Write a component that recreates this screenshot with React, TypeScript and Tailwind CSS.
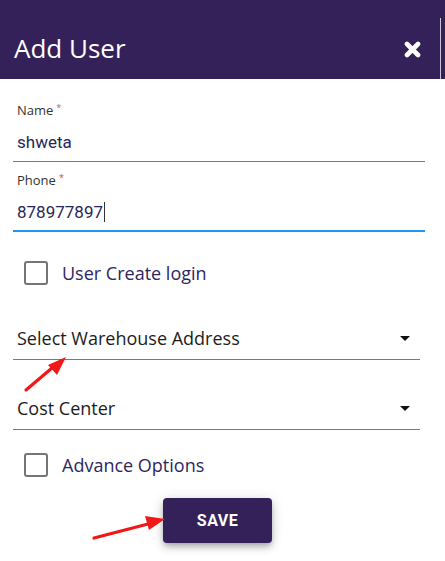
import React from "react";

const Checkbox = ({ label }: { label: string }) => (
  <div className="flex items-center h-[24px] pl-[11px]">
    <div className="w-[24px] h-[24px] border-2 border-[#757575] rounded-[3px] bg-white" />
    <span className="ml-[14px] text-[18px] leading-[24px] text-[#2e2660]" style={{ fontFamily: '"Open Sans", sans-serif' }}>
      {label}
    </span>
  </div>
);

const Caret = () => (
  <svg width="10" height="5" viewBox="0 0 10 5" className="mr-[10px]">
    <path d="M0 0 L10 0 L5 5 Z" fill="#111" />
  </svg>
);

export default function App() {
  return (
    <div className="relative w-[445px] h-[561px] bg-white overflow-hidden">
      {/* Header */}
      <div className="relative h-[79px] bg-[#35215a] flex items-center justify-between pl-[14px] pr-[24px] pt-[16px]">
        <span className="text-white text-[26px] leading-[32px]" style={{ fontFamily: '"Open Sans", sans-serif' }}>
          Add User
        </span>
        <svg width="17" height="17" viewBox="0 0 17 17" className="mt-[3px]">
          <path d="M3 3 L14 14 M14 3 L3 14" stroke="#fff" strokeWidth="4.6" strokeLinecap="round" />
        </svg>
        <div className="absolute left-[440px] top-[18px] w-[1px] h-[61px] bg-[#c9c3d6]" />
      </div>

      {/* Form */}
      <div className="pl-[13px] pr-[23px]" style={{ fontFamily: '"Open Sans", sans-serif' }}>
        {/* Name */}
        <div className="pt-[23px]">
          <div className="pl-[4px] text-[13px] leading-[16px] text-[#333]">
            Name<sup className="text-[9px] text-[#777] ml-[3px]">*</sup>
          </div>
          <div className="mr-[-3px] pt-[12px] pb-[7px] border-b border-[#7a7a7a]">
            <div className="pl-[4px] text-[17px] leading-[24px] text-[#262659]" style={{ fontFamily: "Roboto, sans-serif" }}>
              shweta
            </div>
          </div>
        </div>

        {/* Phone */}
        <div className="pt-[10px]">
          <div className="pl-[4px] text-[13px] leading-[16px] text-[#333]">
            Phone<sup className="text-[9px] text-[#e53935] ml-[3px]">*</sup>
          </div>
          <div className="mr-[-3px] pt-[12px] pb-[6px] border-b-2 border-[#2196f3]">
            <div className="pl-[4px] flex items-center text-[17px] leading-[24px] text-[#262659]" style={{ fontFamily: "Roboto, sans-serif" }}>
              878977897
              <span className="inline-block w-[1px] h-[20px] bg-[#333] ml-[1px]" />
            </div>
          </div>
        </div>

        {/* User Create login */}
        <div className="mt-[29px]">
          <Checkbox label="User Create login" />
        </div>

        {/* Select Warehouse */}
        <div className="mt-[41px] mr-[2px] pb-[9px] border-b border-[#7a7a7a] flex items-center justify-between">
          <span className="pl-[4px] text-[18px] leading-[24px] text-[#1c1c1c]">Select Warehouse Address</span>
          <Caret />
        </div>

        {/* Cost Center */}
        <div className="mt-[36px] mr-[2px] pb-[9px] border-b border-[#7a7a7a] flex items-center justify-between">
          <span className="pl-[4px] text-[18px] leading-[24px] text-[#1c1c1c]">Cost Center</span>
          <Caret />
        </div>

        {/* Advance Options */}
        <div className="mt-[23px]">
          <Checkbox label="Advance Options" />
        </div>

        {/* Save */}
        <div className="mt-[21px] flex justify-center">
          <button
            className="w-[109px] h-[45px] bg-[#35215a] text-white rounded-[4px] text-[16px] font-bold tracking-[0.5px] shadow-[0_3px_5px_-1px_rgba(0,0,0,0.2),0_5px_8px_0_rgba(0,0,0,0.14),0_1px_14px_0_rgba(0,0,0,0.12)]"
            style={{ fontFamily: "Roboto, sans-serif" }}
          >
            SAVE
          </button>
        </div>
      </div>

      {/* Red annotation arrows */}
      <svg className="absolute left-0 top-0 pointer-events-none" width="445" height="561">
        <line x1="26" y1="390" x2="52" y2="368" stroke="#f01818" strokeWidth="3.2" strokeLinecap="round" />
        <path d="M66 357 L48 365 L57 375 Z" fill="#f01818" />
        <line x1="94" y1="538" x2="148" y2="524" stroke="#f01818" strokeWidth="3.2" strokeLinecap="round" />
        <path d="M165 519 L145 516 L149 530 Z" fill="#f01818" />
      </svg>
    </div>
  );
}
